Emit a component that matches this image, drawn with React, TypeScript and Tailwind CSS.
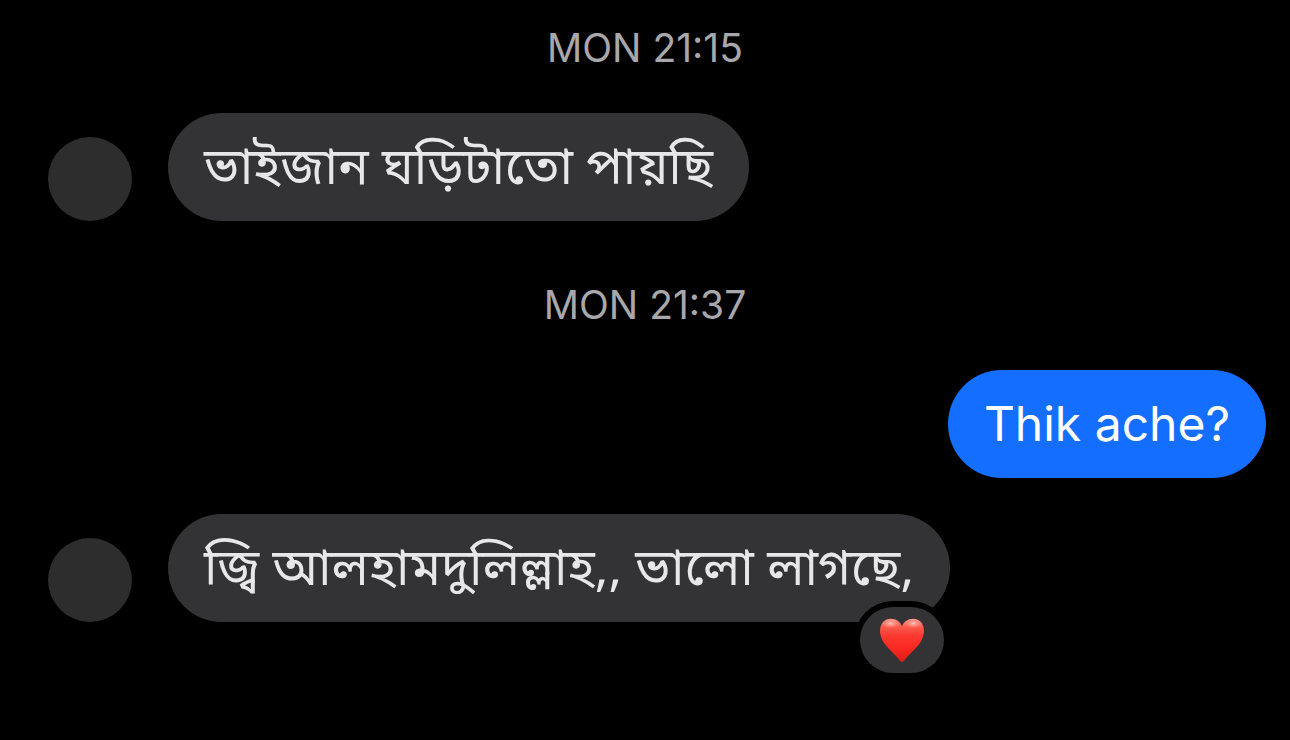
import type { ReactNode } from 'react'

function Stamp({ children }: { children: ReactNode }) {
  return (
    <p className="text-center font-['Inter','Liberation_Sans',sans-serif] text-[39px] leading-[48px] text-[#a8a8ac]">
      {children}
    </p>
  )
}

function Heart() {
  return (
    <svg viewBox="0 0 44 44" className="size-11" aria-hidden="true">
      <defs>
        <linearGradient id="heart-fill" x1="0" y1="0" x2="0" y2="1">
          <stop offset="0" stopColor="#ff8f80" />
          <stop offset="0.2" stopColor="#f8584c" />
          <stop offset="0.4" stopColor="#fb382f" />
          <stop offset="0.7" stopColor="#fc2822" />
          <stop offset="1" stopColor="#dc1a14" />
        </linearGradient>
        <radialGradient id="heart-shine">
          <stop offset="0" stopColor="#ffd8cf" stopOpacity="0.8" />
          <stop offset="1" stopColor="#ff8f80" stopOpacity="0" />
        </radialGradient>
      </defs>
      <path
        d="M22 44C20.8 44 20 43 19 41.5C15.5 36.5 8 31 3.6 24.2C1.2 20.4 0 16.8 0 13C0 5.5 4.6 0.8 11 0.8C16.2 0.8 20.4 3.8 22 8.6C23.6 3.8 27.800 0.8 33 0.8C39.4 0.8 44 5.5 44 13C44 16.8 42.8 20.4 40.4 24.2C36 31 28.5 36.5 25 41.5C24 43 23.2 44 22 44Z"
        fill="url(#heart-fill)"
      />
      <ellipse cx="10.500" cy="5.500" rx="9" ry="5" fill="url(#heart-shine)" />
      <ellipse cx="33.500" cy="5.500" rx="9" ry="5" fill="url(#heart-shine)" />
    </svg>
  )
}

function Incoming({ children, loved = false }: { children: ReactNode; loved?: boolean }) {
  return (
    <div className="flex items-end gap-9 pl-6">
      <div className="size-[84px] shrink-0 rounded-full bg-[#2d2d2d]" />
      <div className="relative rounded-[54px] bg-[#333335] px-9 pt-7 pb-5">
        <p
          lang="bn"
          className="font-['Noto_Sans_Bengali','Noto_Sans',sans-serif] text-[51px] leading-[60px] text-[#e7e7e9]"
        >
          {children}
        </p>
        {loved && (
          <button
            type="button"
            aria-label="Love"
            className="absolute right-1.5 -bottom-[51px] flex h-[66px] w-[84px] items-center justify-center rounded-full bg-[#333335] ring-6 ring-black"
          >
            <Heart />
          </button>
        )}
      </div>
    </div>
  )
}

function Outgoing({ children }: { children: ReactNode }) {
  return (
    <div className="flex justify-end">
      <p className="rounded-[54px] bg-[#146eff] px-9 py-6 font-['Inter','Liberation_Sans',sans-serif] text-5xl leading-[60px] text-white">
        {children}
      </p>
    </div>
  )
}

export default function App() {
  return (
    <main className="min-h-screen bg-black px-6 pt-6 pb-16">
      <section className="flex flex-col gap-[41px]">
        <Stamp>MON 21:15</Stamp>
        <Incoming>ভাইজান ঘড়িটাতো পায়ছি</Incoming>
      </section>

      <section className="mt-[60px] flex flex-col gap-[41px]">
        <Stamp>MON 21:37</Stamp>
        <div className="flex flex-col gap-9">
          <Outgoing>Thik ache?</Outgoing>
          <Incoming loved>জ্বি আলহামদুলিল্লাহ,, ভালো লাগছে,</Incoming>
        </div>
      </section>
    </main>
  )
}
